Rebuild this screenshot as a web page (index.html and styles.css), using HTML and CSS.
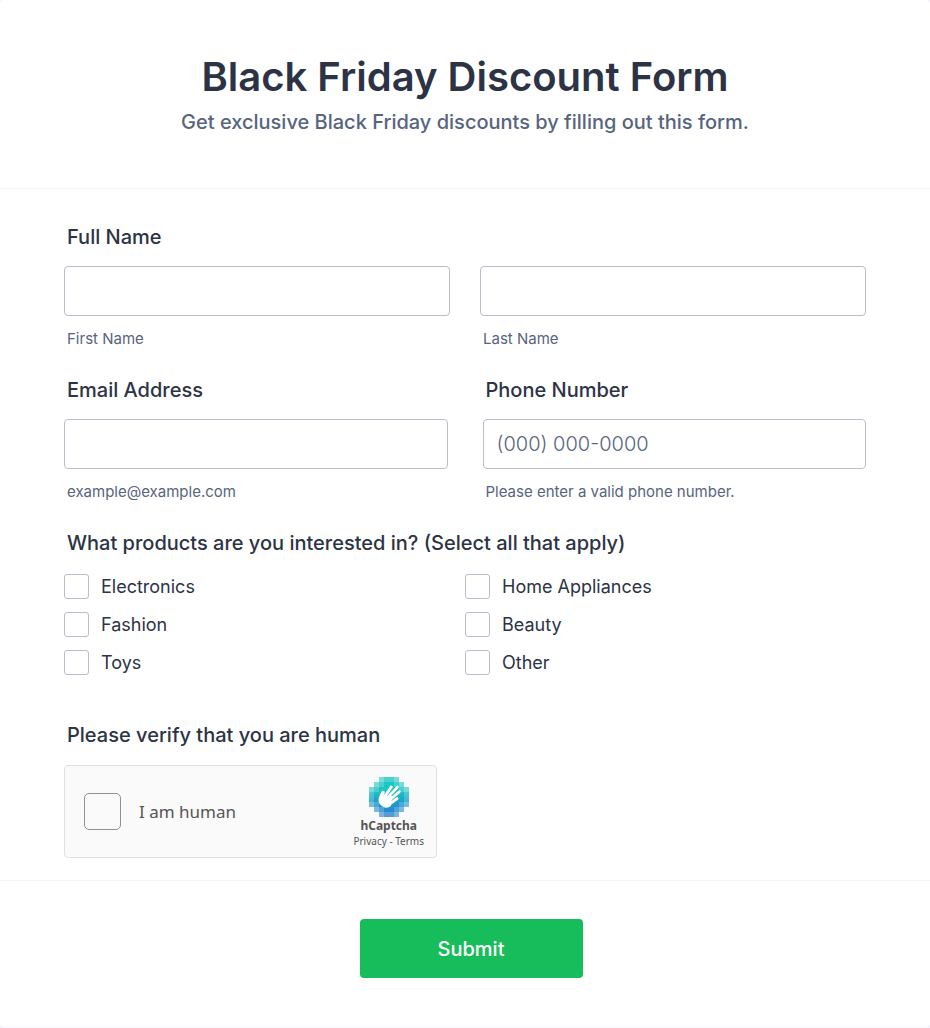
FILE: index.html
```html
<!DOCTYPE html>
<html lang="en">
<head>
  <meta charset="UTF-8">
  <meta name="viewport" content="width=device-width, initial-scale=1.0">
  <title>Black Friday Discount Form</title>
  <link rel="stylesheet" href="styles.css">
</head>
<body>
  <form class="form">
    <header class="form-header">
      <h1>Black Friday Discount Form</h1>
      <p>Get exclusive Black Friday discounts by filling out this form.</p>
    </header>

    <div class="form-body">
      <fieldset class="field">
        <legend class="field-label">Full Name</legend>
        <div class="row name-row">
          <div class="col">
            <input class="text-input" type="text" id="firstName">
            <label class="sub-label" for="firstName">First Name</label>
          </div>
          <div class="col">
            <input class="text-input" type="text" id="lastName">
            <label class="sub-label" for="lastName">Last Name</label>
          </div>
        </div>
      </fieldset>

      <div class="row field contact-row">
        <div class="col">
          <label class="field-label" for="email">Email Address</label>
          <input class="text-input" type="email" id="email" aria-describedby="emailHint">
          <span class="sub-label" id="emailHint">example@example.com</span>
        </div>
        <div class="col">
          <label class="field-label" for="phone">Phone Number</label>
          <input class="text-input" type="tel" id="phone" placeholder="(000) 000-0000" aria-describedby="phoneHint">
          <span class="sub-label" id="phoneHint">Please enter a valid phone number.</span>
        </div>
      </div>

      <fieldset class="field products">
        <legend class="field-label">What products are you interested in? (Select all that apply)</legend>
        <div class="options">
          <label><input type="checkbox" name="products" value="electronics">Electronics</label>
          <label><input type="checkbox" name="products" value="home">Home Appliances</label>
          <label><input type="checkbox" name="products" value="fashion">Fashion</label>
          <label><input type="checkbox" name="products" value="beauty">Beauty</label>
          <label><input type="checkbox" name="products" value="toys">Toys</label>
          <label><input type="checkbox" name="products" value="other">Other</label>
        </div>
      </fieldset>

      <div class="verify">
        <div class="field-label">Please verify that you are human</div>
        <div class="captcha">
          <label class="captcha-check"><input type="checkbox" name="human">I am human</label>
          <div class="captcha-brand">
            <svg class="captcha-logo" viewBox="0 0 32 32" aria-hidden="true">
              <defs>
                <linearGradient id="tiles" x1="0" y1="0" x2="0" y2="32" gradientUnits="userSpaceOnUse">
                  <stop offset="0" stop-color="#1cc8c0"/>
                  <stop offset="0.35" stop-color="#1fc3c6"/>
                  <stop offset="0.65" stop-color="#1b9bcb"/>
                  <stop offset="1" stop-color="#2f7fd0"/>
                </linearGradient>
              </defs>
              <g fill="url(#tiles)">
                <path opacity="0.6" d="M8 0h4v4H8zM20 0h4v4h-4zM4 4h4v4H4zM24 4h4v4h-4zM0 8h4v4H0zM28 8h4v4h-4zM0 20h4v4H0zM28 20h4v4h-4zM4 24h4v4H4zM24 24h4v4h-4zM8 28h4v4H8zM20 28h4v4h-4z"/>
                <path opacity="0.8" d="M12 0h8v4h-8zM8 4h4v4H8zM20 4h4v4h-4zM4 8h4v4H4zM24 8h4v4h-4zM0 12h4v8H0zM28 12h4v8h-4zM4 20h4v4H4zM24 20h4v4h-4zM8 24h4v4H8zM20 24h4v4h-4zM12 28h8v4h-8z"/>
                <path d="M12 4h8v4h4v4h4v8h-4v4h-4v4h-8v-4H8v-4H4v-8h4V8h4z"/>
              </g>
              <path fill="#fff" d="M8 16 9.8 12Q10.8 10.4 12.1 11.2 12.9 12 12.3 13.5L11.4 15.4 18.5 15.2 17.5 23.2Q13.8 26 10 23 6.5 19.8 8 16z"/>
              <path fill="none" stroke="#fff" stroke-width="2.3" stroke-linecap="round" d="M12 16.5 17.8 8M14 17.5 22.6 8.3M16 19 24.2 11.8M16 22 22.5 17.3"/>
            </svg>
            <strong>hCaptcha</strong>
            <div class="captcha-links"><a href="#">Privacy</a> - <a href="#">Terms</a></div>
          </div>
        </div>
      </div>
    </div>

    <footer class="form-footer">
      <button type="submit">Submit</button>
    </footer>
  </form>
</body>
</html>
```

FILE: styles.css
```css
* {
  box-sizing: border-box;
}
body {
  margin: 0;
  background: #f3f3fe;
  font-family: Inter, "Liberation Sans", sans-serif;
  color: #2c3345;
}
.form {
  background: #fff;
  border-radius: 4px;
}
.form-header {
  padding: 52px 64px 54px;
  text-align: center;
  border-bottom: 1px solid #f3f3fe;
}
.form-header h1 {
  margin: 0 0 8px;
  font-size: 40px;
  line-height: 50px;
  font-weight: 600;
}
.form-header p {
  margin: 0;
  font-size: 20px;
  line-height: 24px;
  font-weight: 500;
  color: #57647e;
}
.form-body {
  padding: 36px 64px 22px;
}
fieldset {
  border: 0;
  margin: 0;
  padding: 0;
  min-width: 0;
}
.field {
  margin-bottom: 30px;
}
.field-label {
  display: block;
  padding: 0 3px;
  margin-bottom: 17px;
  font-size: 20px;
  line-height: 24px;
  font-weight: 500;
}
.row {
  display: flex;
}
.name-row {
  gap: 30px;
}
.contact-row {
  gap: 35px;
}
.col {
  flex: 1;
  min-width: 0;
}
.text-input {
  display: block;
  width: 100%;
  height: 50px;
  padding: 0 13px;
  border: 1px solid #b8bdc9;
  border-radius: 4px;
  background: #fff;
  font-family: inherit;
  font-size: 20px;
  color: #2c3345;
}
.text-input::placeholder {
  color: #57647e;
  font-weight: 300;
  opacity: 1;
}
.sub-label {
  display: block;
  margin-top: 14px;
  padding: 0 3px;
  font-size: 15px;
  line-height: 18px;
  color: #57647e;
}
.products {
  margin-bottom: 48px;
}
.products .field-label,
.verify .field-label {
  margin-bottom: 18px;
}
.options {
  display: grid;
  grid-template-columns: 1fr 1fr;
  row-gap: 13px;
  padding-top: 1px;
}
.options label {
  display: flex;
  align-items: center;
  gap: 12px;
  font-size: 18px;
  line-height: 24px;
}
input[type="checkbox"] {
  appearance: none;
  flex: none;
  width: 25px;
  height: 25px;
  margin: 0;
  border: 1px solid #b8bdc9;
  border-radius: 3px;
  background: #fff;
}
.captcha {
  display: flex;
  justify-content: space-between;
  align-items: center;
  max-width: 373px;
  height: 93px;
  padding: 0 12px 0 19px;
  border: 1px solid #e0e0e0;
  border-radius: 4px;
  background: #fafafa;
  font-family: "Noto Sans", sans-serif;
  color: #555;
}
.captcha-check {
  display: flex;
  align-items: center;
  gap: 18px;
  font-size: 17px;
}
.captcha-check input[type="checkbox"] {
  width: 37px;
  height: 37px;
  border-color: #919191;
  border-radius: 5px;
  background: #fafafa;
}
.captcha-brand {
  display: flex;
  flex-direction: column;
  align-items: center;
}
.captcha-logo {
  width: 40px;
  height: 40px;
}
.captcha-brand strong {
  font-size: 12px;
  line-height: 18px;
}
.captcha-links {
  font-size: 10px;
  line-height: 12px;
}
.captcha-links a {
  color: inherit;
  text-decoration: none;
}
.form-footer {
  display: flex;
  justify-content: center;
  padding: 38px 58px 49px 70px;
  border-top: 1px solid #f3f3fe;
}
.form-footer button {
  width: 223px;
  height: 59px;
  border: 0;
  border-radius: 4px;
  background: #18bd5b;
  color: #fff;
  font-family: inherit;
  font-size: 20px;
  font-weight: 500;
}
```
